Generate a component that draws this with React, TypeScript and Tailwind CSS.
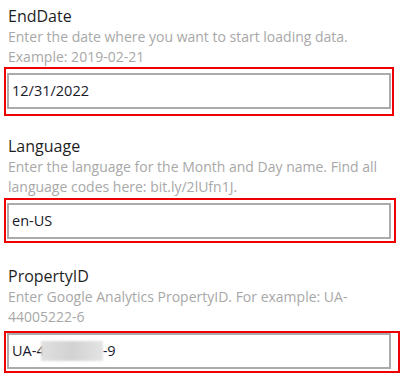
import React from 'react';

const font = { fontFamily: '"Open Sans", "Noto Sans", Arial, sans-serif' };

export default function App() {
  return (
    <div className="w-[419px] h-[380px] bg-white overflow-hidden pt-[5px]" style={font}>
      {/* EndDate */}
      <div className="px-2 text-[16px] leading-[22px] text-[#1f1f1f]">EndDate</div>
      <div className="px-2 text-[14px] leading-[20px] text-[#a8a8a8]">
        Enter the date where you want to start loading data.
        <br />
        Example: 2019-02-21
      </div>
      <div className="ml-1 w-[390px] border-2 border-[#ee0000] pl-px pt-[4px] pb-[5px]">
        <div className="w-[384px] h-[36px] border-2 border-[#ababab] pl-[3px] flex items-center text-[14.5px] text-[#1a1a2a]">
          12/31/2022
        </div>
      </div>

      {/* Language */}
      <div className="mt-[19px] px-2 text-[16px] leading-[22px] text-[#1f1f1f]">Language</div>
      <div className="px-2 text-[14px] leading-[20px] text-[#a8a8a8]">
        Enter the language for the Month and Day name. Find all
        <br />
        language codes here: bit.ly/2lUfn1J.
      </div>
      <div className="mt-px ml-1 w-[392px] border-2 border-[#ee0000] pl-px pt-[3px] pb-[2px]">
        <div className="w-[384px] h-[36px] border-2 border-[#ababab] pl-[3px] flex items-center text-[14.5px] text-[#1a1a2a]">
          en-US
        </div>
      </div>

      {/* PropertyID */}
      <div className="mt-[22px] px-2 text-[16px] leading-[22px] text-[#1f1f1f]">PropertyID</div>
      <div className="px-2 text-[14px] leading-[20px] text-[#a8a8a8]">
        Enter Google Analytics PropertyID. For example: UA-
        <br />
        44005222-6
      </div>
      <div className="mt-[4px] ml-1 w-[396px] border-2 border-[#ee0000] pl-px pb-[2px]">
        <div className="w-[384px] h-[36px] border-2 border-[#ababab] pl-[3px] flex items-center text-[14.5px] text-[#1a1a2a]">
          <span>UA-4</span>
          <span className="-ml-[4px] inline-block w-[62px] h-[20px] bg-gradient-to-r from-[#e0e0e0] via-[#d2d2d2] to-[#e4e4e4] blur-[1px]" />
          <span>-9</span>
        </div>
      </div>
    </div>
  );
}
